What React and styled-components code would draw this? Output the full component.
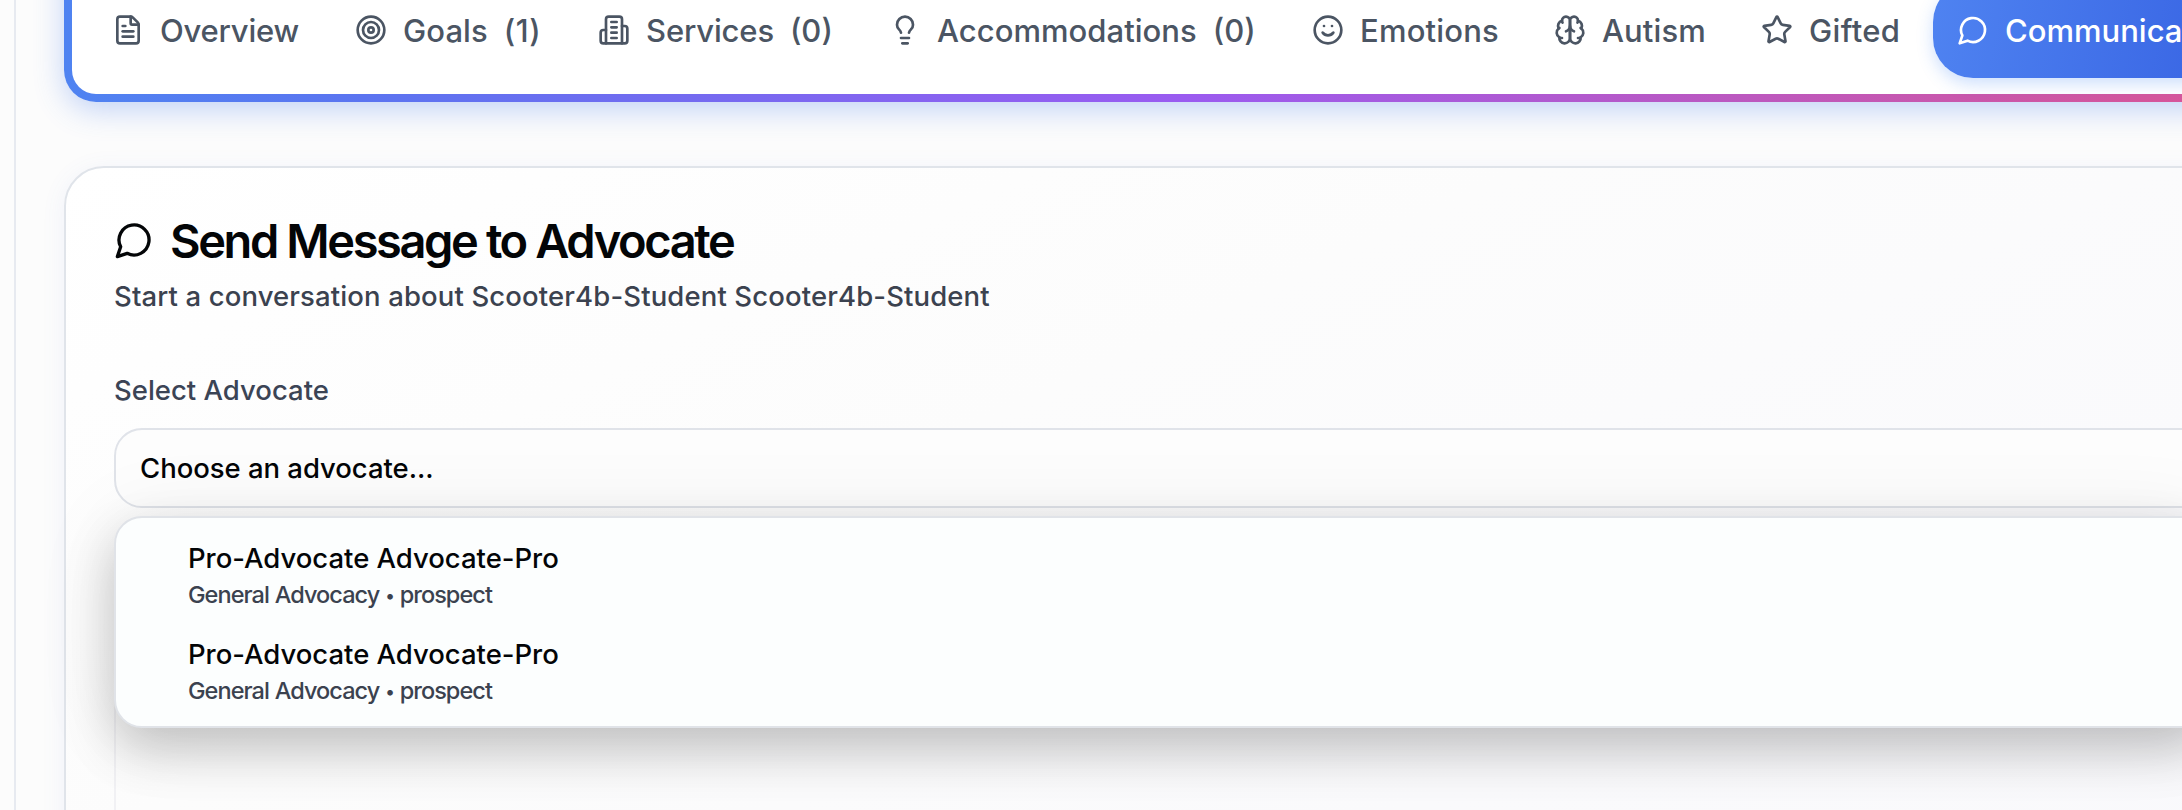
import React from "react";
import styled, { createGlobalStyle, css } from "styled-components";
import { FileText, Target, Lightbulb, Smile, Star } from "lucide-react";

const GlobalStyle = createGlobalStyle`
  * { box-sizing: border-box; }
  html, body { margin: 0; height: 810px; overflow: hidden; }
  body {
    background: #fcfcfc;
    font-family: Inter, "Liberation Sans", sans-serif;
    font-weight: 500;
    color: #030507;
  }
`;

const Page = styled.div`
  display: flex;
  width: 2182px;
  height: 810px;
  overflow: hidden;
  padding-left: 14px;
`;

const Content = styled.main`
  flex: none;
  width: 2400px;
  height: 810px;
  border-left: 2px solid #e7eaf0;
  padding-left: 48px;
`;

const TabFrame = styled.nav`
  width: 2260px;
  height: 142px;
  margin-top: -40px;
  padding: 0 8px 8px;
  border-radius: 0 0 32px 32px;
  background: linear-gradient(90deg, #4f83f1 0, #5b74f0 300px, #9a5bf0 1120px, #d4569c 2080px, #e0559a 100%);
  box-shadow: 0 8px 30px rgba(59, 115, 235, 0.3);
`;

const TabList = styled.div`
  display: flex;
  align-items: flex-end;
  gap: 8px;
  height: 134px;
  padding: 16px;
  border-radius: 0 0 24px 24px;
  background: #fff;
`;

const Tab = styled.button`
  display: flex;
  flex: none;
  align-items: center;
  gap: 16px;
  width: ${(p) => p.$width}px;
  height: 96px;
  padding: 0 24px;
  border: 0;
  border-radius: 40px;
  background: none;
  color: #4b5563;
  font: 500 31px/40px Inter, sans-serif;
  white-space: nowrap;
  svg { flex: none; }
  ${(p) =>
    p.$active &&
    css`
      background: linear-gradient(100deg, #4f83f1, #3b68e5 270px);
      color: #fff;
      box-shadow: 0 6px 16px rgba(59, 130, 246, 0.25);
    `}
`;

const TabText = styled.span`
  padding-top: 2px;
  letter-spacing: ${(p) => p.$track || 0}px;
`;

const Card = styled.section`
  width: 2260px;
  height: 900px;
  margin-top: 64px;
  padding: 48px;
  border: 2px solid #e0e4ea;
  border-radius: 40px;
  background: linear-gradient(155deg, #fff 0%, #fcfcfc 35%, #fafafc 65%, #f9f9fc 100%);
  box-shadow: 0 4px 24px rgba(90, 120, 220, 0.08);
`;

const Title = styled.h2`
  display: flex;
  align-items: center;
  gap: 16px;
  height: 48px;
  margin: 0 0 12px;
  font-size: 47px;
  font-weight: 600;
  line-height: 48px;
  letter-spacing: -2.4px;
  white-space: nowrap;
`;

const TitleText = styled.span`
  padding-top: 2px;
`;

const Subtitle = styled.p`
  margin: 0 0 54px;
  color: #3b424f;
  font-size: 27.5px;
  line-height: 40px;
  letter-spacing: 0.13px;
`;

const Label = styled.label`
  display: block;
  margin-bottom: 18px;
  color: #3b4455;
  font-size: 27.5px;
  line-height: 40px;
`;

const Field = styled.div`
  position: relative;
`;

const SelectTrigger = styled.div`
  display: flex;
  align-items: center;
  width: 2098px;
  height: 80px;
  padding: 0 24px;
  border: 2px solid #e0e3e9;
  border-radius: 28px;
  background: #fdfdfd;
  font-size: 27.5px;
  letter-spacing: -0.04px;
`;

const Menu = styled.div`
  position: absolute;
  z-index: 2;
  top: 88px;
  left: 0;
  width: 2098px;
  height: 212px;
  padding: 8px;
  border: 2px solid #e0e3e8;
  border-radius: 28px;
  background: #fcfefe;
  box-shadow: 0 22px 50px rgba(0, 0, 0, 0.2), 0 6px 84px rgba(0, 0, 0, 0.08);
`;

const Option = styled.div`
  height: 96px;
  padding: 12px 0 12px 64px;
`;

const OptionName = styled.div`
  font-size: 27.5px;
  line-height: 40px;
  letter-spacing: -0.02px;
`;

const OptionMeta = styled.div`
  padding-top: 1px;
  color: #3b424f;
  font-size: 23.5px;
  line-height: 32px;
  letter-spacing: -0.95px;
  word-spacing: 0.5px;
`;

const Bullet = styled.span`
  font-size: 18px;
  line-height: 1;
  vertical-align: 1.5px;
`;

const MessageBox = styled.div`
  width: 2098px;
  height: 400px;
  margin-top: 120px;
  border: 2px solid #f1f1f4;
  border-radius: 28px;
`;

function Icon({ size = 32, children }) {
  return (
    <svg width={size} height={size} viewBox="0 0 24 24" fill="none" stroke="currentColor" strokeWidth="2" strokeLinecap="round" strokeLinejoin="round">
      {children}
    </svg>
  );
}

const MessageIcon = ({ size }) => (
  <Icon size={size}>
    <path d="M7.9 20A9 9 0 1 0 4 16.1L2 22Z" />
  </Icon>
);

const BuildingIcon = () => (
  <Icon>
    <path d="M6 22V4a2 2 0 0 1 2-2h8a2 2 0 0 1 2 2v18Z" />
    <path d="M6 12H4a2 2 0 0 0-2 2v6a2 2 0 0 0 2 2h2" />
    <path d="M18 9h2a2 2 0 0 1 2 2v9a2 2 0 0 1-2 2h-2" />
    <path d="M10 6h4M10 10h4M10 14h4M10 18h4" />
  </Icon>
);

const BrainIcon = () => (
  <Icon>
    <path d="M12 5a3 3 0 1 0-5.997.125 4 4 0 0 0-2.526 5.77 4 4 0 0 0 .556 6.588A4 4 0 1 0 12 18Z" />
    <path d="M12 5a3 3 0 1 1 5.997.125 4 4 0 0 1 2.526 5.77 4 4 0 0 1-.556 6.588A4 4 0 1 1 12 18Z" />
    <path d="M15 13a4.500 4.500 0 0 1-3-4 4.500 4.500 0 0 1-3 4" />
    <path d="M17.599 6.500a3 3 0 0 0 .399-1.375" />
    <path d="M6.003 5.125A3 3 0 0 0 6.401 6.500" />
    <path d="M3.477 10.896a4 4 0 0 1 .585-.396" />
    <path d="M19.938 10.500a4 4 0 0 1 .585.396" />
    <path d="M6 18a4 4 0 0 1-1.967-.516" />
    <path d="M19.967 17.484A4 4 0 0 1 18 18" />
  </Icon>
);

const tabs = [
  { label: "Overview", width: 235, track: -0.2, icon: <FileText size={32} /> },
  { label: "Goals", count: "(1)", width: 235, track: 0.1, countTrack: 0.5, icon: <Target size={32} /> },
  { label: "Services", count: "(0)", width: 283, track: -0.15, icon: <BuildingIcon /> },
  { label: "Accommodations", count: "(0)", width: 415, track: 0.04, icon: <Lightbulb size={32} /> },
  { label: "Emotions", width: 234, track: 0.2, icon: <Smile size={32} /> },
  { label: "Autism", width: 199, track: 0.1, icon: <BrainIcon /> },
  { label: "Gifted", width: 188, track: 0.35, icon: <Star size={32} /> },
  { label: "Communication", width: 340, icon: <MessageIcon size={32} />, active: true },
];

const advocates = [
  { id: 1, name: "Pro-Advocate Advocate-Pro", focus: "General Advocacy", status: "prospect" },
  { id: 2, name: "Pro-Advocate Advocate-Pro", focus: "General Advocacy", status: "prospect" },
];

export default function App() {
  return (
    <Page>
      <GlobalStyle />
      <Content>
        <TabFrame>
          <TabList>
            {tabs.map((t) => (
              <Tab key={t.label} $width={t.width} $active={t.active}>
                {t.icon}
                <TabText $track={t.track}>{t.label}</TabText>
                {t.count && <TabText $track={t.countTrack}>{t.count}</TabText>}
              </Tab>
            ))}
          </TabList>
        </TabFrame>
        <Card>
          <Title>
            <MessageIcon size={40} />
            <TitleText>Send Message to Advocate</TitleText>
          </Title>
          <Subtitle>Start a conversation about Scooter4b-Student Scooter4b-Student</Subtitle>
          <Label>Select Advocate</Label>
          <Field>
            <SelectTrigger>Choose an advocate...</SelectTrigger>
            <Menu>
              {advocates.map((a) => (
                <Option key={a.id}>
                  <OptionName>{a.name}</OptionName>
                  <OptionMeta>
                    {a.focus} <Bullet>•</Bullet> {a.status}
                  </OptionMeta>
                </Option>
              ))}
            </Menu>
          </Field>
          <MessageBox />
        </Card>
      </Content>
    </Page>
  );
}
